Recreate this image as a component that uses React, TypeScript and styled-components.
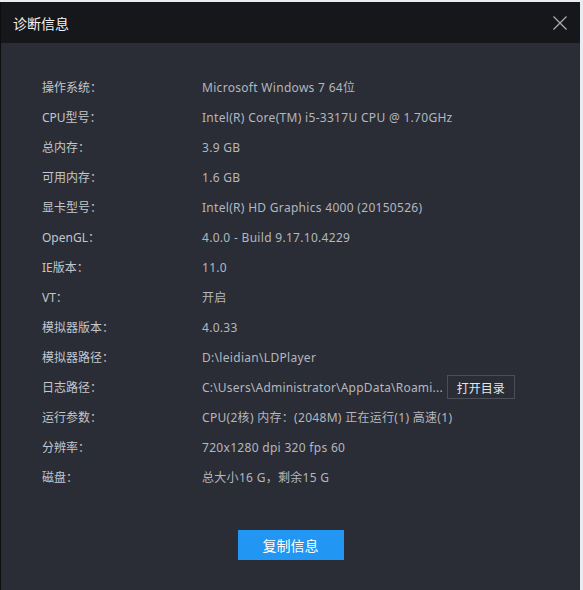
import React from "react";
import styled, { createGlobalStyle } from "styled-components";

const Global = createGlobalStyle`
  html, body { margin: 0; padding: 0; background: #e9edf3; }
  body { font-family: "Noto Sans", "Noto Sans CJK SC", sans-serif; }
  #root { width: 583px; height: 590px; overflow: hidden; }
`;

const Dialog = styled.div`
  margin-top: 2px;
  width: 579px;
  height: 588px;
  border-left: 1px solid #0c0d0f;
  background: #2a2d35;
  display: flex;
  flex-direction: column;
`;

const TitleBar = styled.div`
  height: 41px;
  flex: none;
  background: #16171b;
  display: flex;
  align-items: center;
  justify-content: space-between;
  padding: 0 12px 0 12px;
`;

const Title = styled.div`
  color: #f2f3f5;
  font-size: 14px;
  font-family: "Noto Sans CJK SC", sans-serif;
`;

const Close = styled.button`
  width: 16px;
  height: 16px;
  padding: 0;
  border: 0;
  background: transparent;
  display: flex;
  align-items: center;
  justify-content: center;
  cursor: pointer;
`;

const Body = styled.div`
  flex: 1;
  display: flex;
  flex-direction: column;
  padding: 29px 0 0 41px;
`;

const Rows = styled.div`
  display: flex;
  flex-direction: column;
`;

const Row = styled.div`
  height: 30px;
  display: flex;
  align-items: center;
  font-size: 12px;
`;

const Label = styled.div`
  width: 160px;
  flex: none;
  color: #c3c6cd;
`;

const Value = styled.div<{ $tight?: boolean }>`
  color: #b4b7be;
  letter-spacing: ${(p) => (p.$tight ? "0.2px" : "0.3px")};
  white-space: nowrap;
`;

const SmallButton = styled.button`
  margin-left: 4px;
  height: 24px;
  padding: 0 9px;
  border: 1px solid #4b4e57;
  background: #2a2d35;
  color: #e4e6ea;
  font-family: "Noto Sans CJK SC", sans-serif;
  font-size: 12px;
  cursor: pointer;
`;

const Footer = styled.div`
  display: flex;
  justify-content: center;
  padding: 38px 41px 0 0;
`;

const PrimaryButton = styled.button`
  width: 106px;
  height: 30px;
  border: 0;
  background: #2196f3;
  color: #ffffff;
  font-family: "Noto Sans CJK SC", sans-serif;
  font-size: 14px;
  cursor: pointer;
`;

const rows: [string, string][] = [
  ["操作系统：", "Microsoft Windows 7 64位"],
  ["CPU型号：", "Intel(R) Core(TM) i5-3317U CPU @ 1.70GHz"],
  ["总内存：", "3.9 GB"],
  ["可用内存：", "1.6 GB"],
  ["显卡型号：", "Intel(R) HD Graphics 4000 (20150526)"],
  ["OpenGL：", "4.0.0 - Build 9.17.10.4229"],
  ["IE版本：", "11.0"],
  ["VT：", "开启"],
  ["模拟器版本：", "4.0.33"],
  ["模拟器路径：", "D:\\leidian\\LDPlayer"],
  ["日志路径：", "C:\\Users\\Administrator\\AppData\\Roami..."],
  ["运行参数：", "CPU(2核) 内存：(2048M) 正在运行(1) 高速(1)"],
  ["分辨率：", "720x1280 dpi 320 fps 60"],
  ["磁盘：", "总大小16 G，剩余15 G"],
];

export default function App() {
  return (
    <>
      <Global />
      <Dialog>
        <TitleBar>
          <Title>诊断信息</Title>
          <Close aria-label="关闭">
            <svg width="14" height="14" viewBox="0 0 14 14">
              <path d="M0.5 0.5 L13.5 13.5 M13.5 0.5 L0.5 13.5" stroke="#a9abb0" strokeWidth="1.3" />
            </svg>
          </Close>
        </TitleBar>
        <Body>
          <Rows>
            {rows.map(([k, v]) => (
              <Row key={k}>
                <Label>{k}</Label>
                {k === "日志路径：" ? (
                  <>
                    <Value $tight>{v}</Value>
                    <SmallButton>打开目录</SmallButton>
                  </>
                ) : (
                  <Value>{v}</Value>
                )}
              </Row>
            ))}
          </Rows>
          <Footer>
            <PrimaryButton>复制信息</PrimaryButton>
          </Footer>
        </Body>
      </Dialog>
    </>
  );
}
